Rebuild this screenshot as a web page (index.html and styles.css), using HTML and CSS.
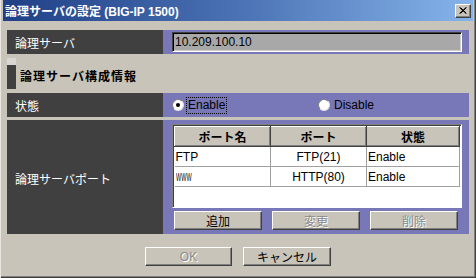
FILE: index.html
```html
<!DOCTYPE html>
<html lang="ja">

<head>
    <meta charset="UTF-8">
    <title>論理サーバの設定</title>
    <link rel="stylesheet" href="styles.css">
</head>

<body>
    <div class="window">
        <div class="titlebar">
            <span class="title">論理サーバの設定 (BIG-IP 1500)</span>
            <span class="close">
                <svg width="8" height="7" viewBox="0 0 8 7">
                    <path d="M0.5 0.5 L7 6.5 M1.5 0.5 L7.5 6.5 M7 0.5 L0.5 6.5 M7.5 0.5 L1.5 6.5" stroke="#000" stroke-width="1"></path>
                </svg>
            </span>
        </div>

        <div class="content">
            <div class="row row-server">
                <div class="label">論理サーバ</div>
                <div class="value">
                    <div class="field">10.209.100.10</div>
                </div>
            </div>

            <div class="section">
                <span class="marker"></span>
                <h2>論理サーバ構成情報</h2>
            </div>

            <div class="row row-state">
                <div class="label">状態</div>
                <div class="value radios">
                    <div class="radio checked"><span class="dot"></span><span class="focus">Enable</span></div>
                    <div class="radio"><span class="dot"></span><span>Disable</span></div>
                </div>
            </div>

            <div class="row row-ports">
                <div class="label">論理サーバポート</div>
                <div class="value">
                    <div class="grid-frame">
                        <table>
                            <tr>
                                <th>ポート名</th>
                                <th>ポート</th>
                                <th>状態</th>
                            </tr>
                            <tr>
                                <td>FTP</td>
                                <td class="center">FTP(21)</td>
                                <td>Enable</td>
                            </tr>
                            <tr>
                                <td><span class="squash">WWW</span></td>
                                <td class="center">HTTP(80)</td>
                                <td>Enable</td>
                            </tr>
                        </table>
                    </div>
                    <div class="actions">
                        <button>追加</button>
                        <button disabled>変更</button>
                        <button disabled>削除</button>
                    </div>
                </div>
            </div>
        </div>

        <div class="footer">
            <button class="ok" disabled>OK</button>
            <button class="cancel">キャンセル</button>
        </div>
    </div>
</body>

</html>
```

FILE: styles.css
```css
body {
    margin: 0;
    font-family: 'Liberation Sans', 'Noto Sans CJK JP', sans-serif;
    font-size: 12px;
    color: #000;
    background: #c8c4ba;
}

.window {
    width: 476px;
    height: 278px;
    box-sizing: border-box;
    padding: 0 3px 3px;
    background-color: #c8c4ba;
    box-shadow: inset 1px 0 #e8e6e0, inset -1px -1px #404040, inset -2px -2px #808080;
}

.titlebar {
    height: 21px;
    display: flex;
    align-items: center;
    justify-content: space-between;
    padding: 0 2px;
    background: linear-gradient(to right, #203f86, #4a72b4 50%, #86b4ea);
}

.title {
    color: #fff;
    font-weight: bold;
    font-size: 12px;
    white-space: nowrap;
}

.close {
    width: 16px;
    height: 14px;
    box-sizing: border-box;
    display: flex;
    align-items: center;
    justify-content: center;
    background-color: #c8c4ba;
    border: 1px solid;
    border-color: #fff #404040 #404040 #fff;
    box-shadow: inset -1px -1px #808080;
}

.content {
    padding: 9px 4px 0;
}

.row {
    display: grid;
    grid-template-columns: 156px 306px;
}

.label {
    background-color: #404040;
    color: #fff;
    padding-left: 8px;
    display: flex;
    align-items: center;
}

.value {
    background-color: #7878b8;
    padding: 0 7px 0 9px;
}

.row-server {
    height: 24px;
}

.row-server .value {
    padding-top: 2px;
}

.field {
    height: 20px;
    box-sizing: border-box;
    background-color: #a8a8a8;
    border: 1px solid;
    border-color: #404040 #fff #fff #404040;
    box-shadow: inset 1px 1px #000, inset -1px -1px #d4d0c8;
    padding: 0 2px;
    line-height: 18px;
}

.section {
    display: flex;
    align-items: center;
    height: 31px;
    margin-top: 4px;
}

.marker {
    width: 9px;
    height: 31px;
    box-sizing: border-box;
    border-top: 7px solid #d8d6d0;
    background-color: #404040;
    margin-right: 4px;
}

h2 {
    margin: 4px 0 0;
    font-size: 12px;
    font-weight: bold;
    letter-spacing: 1px;
}

.row-state {
    height: 24px;
    margin-top: 4px;
}

.radios {
    display: grid;
    grid-template-columns: 146px auto;
    align-items: center;
}

.radio {
    display: flex;
    align-items: center;
}

.dot {
    width: 12px;
    height: 12px;
    box-sizing: border-box;
    border-radius: 50%;
    background-color: #fff;
    border: 1px solid;
    border-color: #808080 #e0e0e0 #e0e0e0 #808080;
    margin-right: 4px;
    position: relative;
}

.checked .dot::after {
    content: "";
    position: absolute;
    left: 3px;
    top: 3px;
    width: 4px;
    height: 4px;
    border-radius: 50%;
    background-color: #000;
}

.focus {
    outline: 1px dotted #000;
    padding: 0 1px;
    margin-left: -1px;
    line-height: 15px;
}

.row-ports {
    height: 114px;
    margin-top: 3px;
}

.row-ports .label {
    padding-top: 2px;
}

.row-ports .value {
    padding-top: 4px;
}

.grid-frame {
    height: 84px;
    box-sizing: border-box;
    background-color: #fff;
    border: 1px solid;
    border-color: #808080 #fff #fff #808080;
    box-shadow: inset 1px 1px #404040;
    padding: 1px 0 0 1px;
}

table {
    border-collapse: collapse;
    table-layout: fixed;
    width: 286px;
}

th {
    height: 20px;
    box-sizing: border-box;
    padding: 0;
    font-weight: bold;
    background-color: #c8c4ba;
    border: 1px solid;
    border-color: #fff #404040 #404040 #fff;
    box-shadow: inset -1px -1px #808080;
}

th:nth-child(1),
th:nth-child(2) {
    width: 96px;
}

td {
    height: 20px;
    box-sizing: border-box;
    padding: 0 1px;
    border: 1px solid #a0a0a0;
    border-top: none;
    white-space: nowrap;
}

td:first-child {
    border-left: none;
}

.center {
    text-align: center;
}

.squash {
    display: inline-block;
    transform: scaleX(0.5);
    transform-origin: left;
    font-size: 11px;
}

.actions {
    display: grid;
    grid-template-columns: 88px 88px 88px;
    gap: 10px;
    margin: 3px 0 0 2px;
}

button {
    height: 19px;
    padding: 0;
    font-family: inherit;
    font-size: 12px;
    color: #000;
    background-color: #c8c4ba;
    border: 1px solid;
    border-color: #fff #404040 #404040 #fff;
    box-shadow: inset -1px -1px #808080;
}

button:disabled {
    color: #8a8a8a;
    text-shadow: 1px 1px #fff;
}

.footer {
    display: flex;
    justify-content: center;
    gap: 11px;
    padding-top: 13px;
}

.ok {
    width: 87px;
}

.cancel {
    width: 88px;
}
```
